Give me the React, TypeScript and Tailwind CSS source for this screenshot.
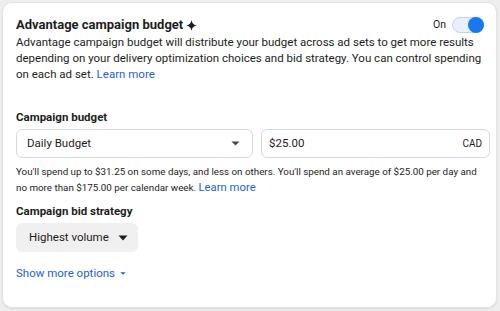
import React from "react";

function Caret({ className = "" }: { className?: string }) {
  return (
    <svg viewBox="0 0 10 6" className={className} aria-hidden preserveAspectRatio="none">
      <path d="M0.5 0.5 L5 5.5 L9.5 0.5 Z" fill="currentColor" />
    </svg>
  );
}

export default function App() {
  return (
    <div
      className="w-[500px] h-[311px] bg-[#eeeeee] pl-[2px] pt-[2px] pr-[3px] pb-[3px]"
      style={{ fontFamily: "Roboto, 'Liberation Sans', sans-serif" }}
    >
      <div className="h-full rounded-[10px] bg-white border border-[#e4e4e4] shadow-[0_1px_2px_rgba(0,0,0,0.10)] pl-[13px] pr-[6px] pt-[13px] text-[#1c1e21]">
        <div className="flex items-center justify-between h-[18px]">
          <div className="flex items-center gap-[3px] text-[13px] font-bold leading-[18px]">
            <span>Advantage campaign budget</span>
            <svg viewBox="0 0 12 12" className="w-[11px] h-[11px]" aria-hidden>
              <path d="M6 0 C6.5 3.6 8.4 5.5 12 6 C8.4 6.5 6.5 8.4 6 12 C5.5 8.4 3.6 6.5 0 6 C3.6 5.5 5.5 3.6 6 0 Z" fill="#1c1e21" />
            </svg>
          </div>
          <div className="flex items-center gap-[6px] mr-[6px]">
            <span className="text-[10.5px] text-[#1c1e21]">On</span>
            <div className="w-[32px] h-[16px] rounded-full bg-[#e8f0fd] border border-[#c6d3e6] flex items-center justify-end">
              <div className="w-[16px] h-[16px] rounded-full bg-[#1877f2] -mr-[1px]" />
            </div>
          </div>
        </div>
        <p className="text-[11.5px] leading-[16px] whitespace-nowrap">
          Advantage campaign budget will distribute your budget across ad sets to get more results
          <br />
          depending on your delivery optimization choices and bid strategy. You can control spending
          <br />
          on each ad set. <span className="text-[#1b63d6]">Learn more</span>
        </p>

        <div className="mt-[27px] text-[11.5px] font-bold leading-[16px]">Campaign budget</div>
        <div className="mt-[4px] flex gap-[8px] w-[474px]">
          <div className="flex-1 h-[29px] rounded-[6px] border border-[#d6d9dd] flex items-center justify-between pl-[10px] pr-[12px]">
            <span className="text-[11.5px]">Daily Budget</span>
            <Caret className="w-[9px] h-[5px] text-[#444950]" />
          </div>
          <div className="flex-1 h-[29px] rounded-[6px] border border-[#d6d9dd] flex items-center justify-between pl-[7px] pr-[7px]">
            <span className="text-[11.5px]">$25.00</span>
            <span className="text-[10px]">CAD</span>
          </div>
        </div>
        <p className="mt-[6px] text-[9.8px] leading-[16px] whitespace-nowrap">
          You'll spend up to $31.25 on some days, and less on others. You'll spend an average of $25.00 per day and
          <br />
          no more than $175.00 per calendar week. <span className="text-[#1b63d6] text-[11.3px]">Learn more</span>
        </p>

        <div className="mt-[7px] text-[11.5px] font-bold leading-[16px]">Campaign bid strategy</div>
        <div className="mt-[4px] inline-flex items-center gap-[9px] h-[29px] rounded-[6px] bg-[#f0f0f0] pl-[13px] pr-[10px]">
          <span className="text-[11.5px]">Highest volume</span>
          <Caret className="w-[10px] h-[6px] text-[#1c1e21]" />
        </div>
        <div className="mt-[13px] flex items-center gap-[5px] text-[11.5px] text-[#1b63d6] leading-[16px]">
          <span>Show more options</span>
          <Caret className="w-[6px] h-[3px]" />
        </div>
      </div>
    </div>
  );
}
